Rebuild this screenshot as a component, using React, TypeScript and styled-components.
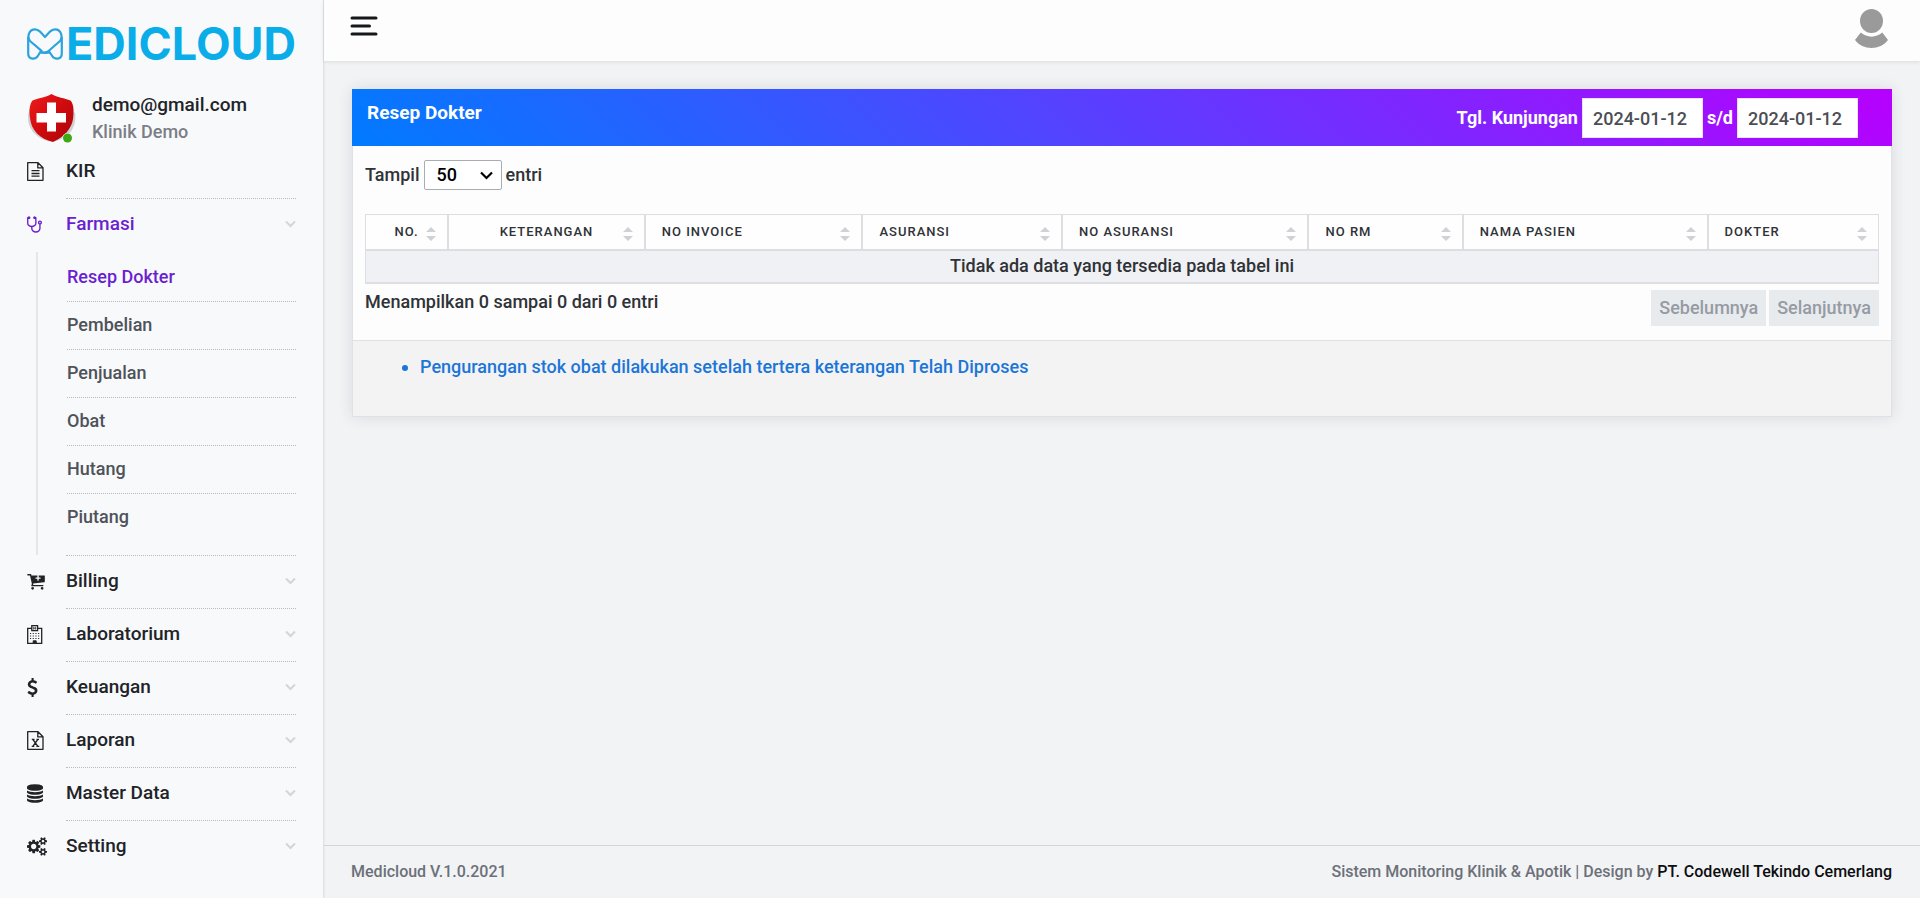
import React from "react";
import styled, { createGlobalStyle, css } from "styled-components";

const GlobalStyle = createGlobalStyle`
  *, *::before, *::after { box-sizing: border-box; }
  body {
    margin: 0;
    background: #f2f3f5;
    color: #2f3236;
    font-family: Roboto, "Liberation Sans", sans-serif;
    font-size: 18px;
    font-weight: 500;
    line-height: 24px;
  }
  a { color: inherit; text-decoration: none; }
  button, input, select { font: inherit; }
  button { cursor: pointer; }
`;

/* ---------- shell ---------- */

const Shell = styled.div`
  display: flex;
  min-height: 100vh;
`;

const Sidebar = styled.aside`
  flex: 0 0 324px;
  padding: 0 27px;
  background: #f8f9fb;
  border-right: 1px solid #dfe1e5;
  box-shadow: 1px 0 2px rgba(0, 0, 0, 0.04);
`;

const Column = styled.div`
  flex: 1;
  min-width: 0;
  display: flex;
  flex-direction: column;
`;

const TopBar = styled.header`
  display: flex;
  justify-content: space-between;
  align-items: flex-start;
  height: 61px;
  padding: 6px 28px 0 26px;
  background: #fdfdfd;
  box-shadow: 0 1px 4px rgba(0, 0, 0, 0.1);
`;

const PlainButton = styled.button`
  display: block;
  padding: 0;
  border: 0;
  background: none;
`;

const BurgerButton = styled(PlainButton)`
  padding-top: 10px;
`;

const Main = styled.main`
  flex: 1;
  padding: 28px;
`;

const PageFooter = styled.footer`
  display: flex;
  justify-content: space-between;
  padding: 14px 28px 14px 27px;
  border-top: 1px solid #d3d6dc;
  color: #6c7079;
  font-size: 16px;
  a { color: #0c0d0f; }
`;

/* ---------- sidebar ---------- */

const Brand = styled.a`
  display: flex;
  align-items: center;
  gap: 3px;
  height: 89px;
  padding-bottom: 2px;
  color: #0bade9;
  font-family: Inter, sans-serif;
  font-size: 45px;
  font-weight: 700;
  line-height: 48px;
`;

const Profile = styled.div`
  display: flex;
  gap: 16px;
  height: 57px;
  padding-top: 4px;
`;

const ProfileText = styled.div`
  display: flex;
  flex-direction: column;
  gap: 3px;
`;

const Mail = styled.span`
  color: #212327;
  font-size: 19px;
`;

const Clinic = styled.span`
  color: #7b7e85;
`;

const Menu = styled.ul`
  margin: 0;
  padding: 0;
  list-style: none;
`;

const MenuItem = styled.li`
  &:last-child > a > span { border-bottom-color: transparent; }
`;

const MenuLink = styled.a<{ $active?: boolean }>`
  display: grid;
  grid-template-columns: 39px 1fr;
  align-items: center;
  height: 53px;
  color: ${(p) => (p.$active ? "#6a1fd0" : "#212327")};
  font-size: 19px;
  > svg { margin-bottom: 2px; }
`;

const MenuLabel = styled.span<{ $plain?: boolean }>`
  display: flex;
  align-items: center;
  justify-content: space-between;
  height: 53px;
  padding-bottom: 2px;
  border-bottom: 1px dotted ${(p) => (p.$plain ? "transparent" : "#b9bcc2")};
`;

const SubMenu = styled.ul`
  margin: 0 0 0 9px;
  padding: 2px 0 14px 29px;
  border-left: 2px solid #e4e6ea;
  list-style: none;
`;

const SubItem = styled.li`
  border-bottom: 1px dotted #b9bcc2;
  &:last-child { border-bottom: 0; }
`;

const SubLink = styled.a<{ $active?: boolean }>`
  display: block;
  padding: 11px 0 12px;
  color: ${(p) => (p.$active ? "#6a1fd0" : "#4f5259")};
`;

const GroupRule = styled.div`
  margin-left: 39px;
  border-bottom: 1px dotted #b9bcc2;
`;

/* ---------- card ---------- */

const Card = styled.section`
  border: 1px solid #dfe1e4;
  border-top: 0;
  background: #fdfdfd;
  box-shadow: 0 0 14px rgba(40, 45, 60, 0.12);
`;

const CardHeader = styled.div`
  display: flex;
  justify-content: space-between;
  align-items: flex-start;
  height: 57px;
  margin: 0 -1px;
  padding: 9px 34px 0 15px;
  background: linear-gradient(45deg, #007bff, #b700ff);
  color: #fff;
  font-weight: 700;
`;

const CardTitle = styled.h1`
  margin: 0;
  padding-top: 3px;
  font-size: 19px;
  font-weight: 700;
  line-height: 24px;
`;

const DateRange = styled.div`
  display: flex;
  align-items: center;
  gap: 4px;
`;

const DateInput = styled.input`
  width: 121px;
  height: 40px;
  padding: 0 10px;
  border: 1px solid #e8e0ff;
  border-radius: 0;
  background: #fff;
  color: #4b4e54;
  font-weight: 500;
`;

const CardBody = styled.div`
  padding: 14px 12px;
`;

const LengthRow = styled.label`
  display: flex;
  align-items: center;
  gap: 4px;
  margin-bottom: 24px;
`;

const SelectBox = styled.span`
  display: grid;
  align-items: center;
  width: 78px;
  height: 30px;
  border: 1px solid #a9acb1;
  border-radius: 2px;
  background: #fff;
  > * { grid-area: 1 / 1; }
  > svg { justify-self: end; margin-right: 8px; pointer-events: none; }
`;

const Select = styled.select`
  appearance: none;
  width: 100%;
  height: 28px;
  padding: 0 0 0 12px;
  border: 0;
  background: none;
  color: #000;
`;

const Table = styled.table`
  width: 100%;
  table-layout: fixed;
  border-collapse: separate;
  border-spacing: 0;
  border: 1px solid #dcdee2;
  border-bottom-width: 2px;
`;

const HeadCell = styled.th<{ $width: number }>`
  width: ${(p) => p.$width}%;
  padding: 0;
  border-bottom: 2px solid #dcdee2;
  border-right: 2px solid #dcdee2;
  background: #fefefe;
  &:last-child { border-right: 0; }
`;

const SortButton = styled(PlainButton)<{ $centered?: boolean }>`
  display: grid;
  align-items: center;
  width: 100%;
  height: 34px;
  color: #2f3236;
  font-size: 13px;
  font-weight: 500;
  line-height: 18px;
  letter-spacing: 1px;
  text-transform: uppercase;
  ${(p) =>
    p.$centered
      ? css`
          grid-template-columns: 10px 1fr 10px;
          padding: 0 11px;
          text-align: center;
          &::before { content: ""; }
        `
      : css`
          grid-template-columns: 1fr 10px;
          padding: 0 11px 0 16px;
          text-align: left;
        `}
  svg { margin-top: 3px; }
`;

const EmptyCell = styled.td`
  height: 31px;
  padding: 0 12px 2px;
  background: #f0f1f4;
  text-align: center;
`;

const TableFooter = styled.div`
  display: flex;
  justify-content: space-between;
  align-items: flex-start;
  padding-top: 6px;
`;

const Pager = styled.div`
  display: flex;
  gap: 3px;
`;

const PageButton = styled.button`
  height: 36px;
  padding: 0 8px;
  border: 0;
  background: #e8ebee;
  color: #969ba3;
`;

const CardFooter = styled.div`
  min-height: 76px;
  padding: 14px 13px;
  border-top: 1px solid #dfe1e4;
  background: #f3f3f4;
`;

const Notes = styled.ul`
  margin: 0;
  padding-left: 54px;
  color: #1c76d8;
`;

/* ---------- icons ---------- */

type GlyphProps = { width: number; d: string };

const Glyph = ({ width, d }: GlyphProps) => (
  <svg
    width={Math.round((width * 19) / 1792)}
    height="19"
    viewBox={`0 0 ${width} 1792`}
    fill="currentColor"
    aria-hidden="true"
  >
    <path d={d} />
  </svg>
);

const stethoscope =
  "M1280 704q0-26-19-45t-45-19-45 19-19 45 19 45 45 19 45-19 19-45zm128 0q0 62-35.500 111t-92.500 70v395q0 159-131.500 271.500t-316.500 112.500-316.500-112.500-131.500-271.500v-132q-164-20-274-128t-110-252v-512q0-26 19-45t45-19q6 0 16 2 17-30 47-48t65-18q53 0 90.500 37.500t37.500 90.500-37.500 90.500-90.500 37.500q-33 0-64-18v402q0 106 94 181t226 75 226-75 94-181v-402q-31 18-64 18-53 0-90.500-37.500t-37.500-90.500 37.500-90.500 90.500-37.500q35 0 65 18t47 48q10-2 16-2 26 0 45 19t19 45v512q0 144-110 252t-274 128v132q0 106 94 181t226 75 226-75 94-181v-395q-57-21-92.500-70t-35.500-111q0-80 56-136t136-56 136 56 56 136z";

const cart =
  "M1280 576q0-26-19-45t-45-19h-128v-128q0-26-19-45t-45-19-45 19-19 45v128h-128q-26 0-45 19t-19 45 19 45 45 19h128v128q0 26 19 45t45 19 45-19 19-45v-128h128q26 0 45-19t19-45zM640 1536q0 53-37.500 90.500t-90.500 37.500-90.500-37.500-37.500-90.500 37.500-90.500 90.500-37.500 90.500 37.500 37.500 90.500zm896 0q0 53-37.500 90.500t-90.500 37.500-90.500-37.500-37.500-90.500 37.500-90.500 90.500-37.500 90.500 37.500 37.500 90.500zm128-1152v512q0 24-16 42.500t-41 21.500l-1044 122q1 7 4.500 21.500t6 26.500 2.500 22q0 16-24 64h920q26 0 45 19t19 45-19 45-45 19h-1024q-26 0-45-19t-19-45q0-14 11-39.500t29.500-59.500 20.500-38l-177-823h-204q-26 0-45-19t-19-45 19-45 45-19h256q16 0 28.500 6.500t20 15.500 13 24.500 7.500 26.500 5.500 29.500 4.500 25.500h1201q26 0 45 19t19 45z";

const dollar =
  "M978 1185q0 153-99.500 263.500t-258.500 136.500v175q0 14-9 23t-23 9h-135q-13 0-22.500-9.500t-9.500-22.500v-175q-66-9-127.500-31t-101.500-44.500-74-48-46.500-37.500-17.500-18q-17-21-2-41l103-135q7-10 23-12 15-2 24 9l2 2q113 99 243 125 37 8 74 8 81 0 142.500-43t61.500-122q0-28-15-53t-33.500-42-58.500-37.500-66-32-80-32.500q-39-16-61.500-25t-61.500-26.500-62.500-31-56.500-35.500-53.500-42.500-43.500-49-35.500-58-21-66.500-8.500-78q0-138 98-242t255-134v-180q0-13 9.500-22.500t22.500-9.500h135q14 0 23 9t9 23v176q57 6 110.500 23t87 33.500 63.500 37.500 39 29 15 14q17 18 5 38l-81 146q-8 15-23 16-14 3-27-7-3-3-14.500-12t-39-26.500-58.500-32-74.500-26-85.500-11.500q-95 0-155 43t-60 111q0 26 8.500 48t29.500 41.500 39.500 33 56 31 60.500 27 70 27.500q53 20 81 31.500t76 35 75.500 42.500 62 50 53 63.500 31.500 76.500 13 94z";

const database =
  "M768 768q237 0 443-43t325-127v170q0 69-103 128t-280 93.500-385 34.500-385-34.500-280-93.500-103-128v-170q119 84 325 127t443 43zm0 768q237 0 443-43t325-127v170q0 69-103 128t-280 93.500-385 34.500-385-34.500-280-93.500-103-128v-170q119 84 325 127t443 43zm0-384q237 0 443-43t325-127v170q0 69-103 128t-280 93.500-385 34.500-385-34.500-280-93.500-103-128v-170q119 84 325 127t443 43zm0-1152q208 0 385 34.500t280 93.500 103 128v128q0 69-103 128t-280 93.500-385 34.500-385-34.500-280-93.500-103-128v-128q0-69 103-128t280-93.500 385-34.500z";

const cogs =
  "M896 896q0-106-75-181t-181-75-181 75-75 181 75 181 181 75 181-75 75-181zm768 512q0-52-38-90t-90-38-90 38-38 90q0 53 37.500 90.500t90.500 37.500 90.500-37.500 37.500-90.500zm0-1024q0-52-38-90t-90-38-90 38-38 90q0 53 37.500 90.500t90.500 37.500 90.500-37.500 37.500-90.500zm-384 421v185q0 10-7 19.500t-16 10.500l-155 24q-11 35-32 76 34 48 90 115 7 11 7 20 0 12-7 19-23 30-82.500 89.500t-78.500 59.500q-11 0-21-7l-115-90q-37 19-77 31-11 108-23 155-7 24-30 24h-186q-11 0-20-7.500t-10-17.500l-23-153q-34-10-75-31l-118 89q-7 7-20 7-11 0-21-8-144-133-144-160 0-9 7-19 10-14 41-53t47-61q-23-44-35-82l-152-24q-10-1-17-9.500t-7-19.500v-185q0-10 7-19.500t16-10.500l155-24q11-35 32-76-34-48-90-115-7-11-7-20 0-12 7-20 22-30 82-89t79-59q11 0 21 7l115 90q34-18 77-32 11-108 23-154 7-24 30-24h186q11 0 20 7.500t10 17.500l23 153q34 10 75 31l118-89q8-7 20-7 11 0 21 8 144 133 144 160 0 8-7 19-12 16-42 54t-45 60q23 48 34 82l152 23q10 2 17 10.500t7 19.500zm640 533v140q0 16-149 31-12 27-30 52 51 113 51 138 0 4-4 7-122 71-124 71-8 0-46-47t-52-68q-20 2-30 2t-30-2q-14 21-52 68t-46 47q-2 0-124-71-4-3-4-7 0-25 51-138-18-25-30-52-149-15-149-31v-140q0-16 149-31 13-29 30-52-51-113-51-138 0-4 4-7 4-2 35-20t59-34 30-16q8 0 46 46.500t52 67.500q20-2 30-2t30 2q51-71 92-112l6-2q4 0 124 70 4 3 4 7 0 25-51 138 17 23 30 52 149 15 149 31zm0-1024v140q0 16-149 31-12 27-30 52 51 113 51 138 0 4-4 7-122 71-124 71-8 0-46-47t-52-68q-20 2-30 2t-30-2q-14 21-52 68t-46 47q-2 0-124-71-4-3-4-7 0-25 51-138-18-25-30-52-149-15-149-31v-140q0-16 149-31 13-29 30-52-51-113-51-138 0-4 4-7 4-2 35-20t59-34 30-16q8 0 46 46.500t52 67.500q20-2 30-2t30 2q51-71 92-112l6-2q4 0 124 70 4 3 4 7 0 25-51 138 17 23 30 52 149 15 149 31z";

const SheetIcon = ({ children }: { children: React.ReactNode }) => (
  <svg width="17" height="19" viewBox="0 0 17 19" fill="none" stroke="currentColor" strokeWidth="1.300" aria-hidden="true">
    <path d="M.7.700h10.300l5 5v12.600H.7zM10.800.700v5.200H16" strokeLinejoin="round" />
    {children}
  </svg>
);

const FileTextIcon = () => (
  <SheetIcon>
    <path d="M4.500 8.700h8M4.500 11.500h8M4.500 14.200h8" />
  </SheetIcon>
);

const FileExcelIcon = () => (
  <SheetIcon>
    <path d="M5.900 8.500l5 6.800M10.800 8.500l-5 6.800M4.800 8.400h2.700M9.500 8.400h2.500M4.700 15.400h2.600M9.400 15.400h2.900" />
  </SheetIcon>
);

const HospitalIcon = () => (
  <svg width="16" height="19" viewBox="0 0 16 19" fill="none" stroke="currentColor" strokeWidth="1.300" aria-hidden="true">
    <path d="M4.800 3.400H.7v14.900h14V3.400h-4.100M4.800 5.600V.7h5.800v4.900z" />
    <path d="M6.700 1.800v2.800M8.700 1.800v2.800M6.700 3.200h2" strokeWidth=".8" />
    <path d="M3 8.500h10M3 11h10M3 13.500h10" strokeWidth="1.100" strokeDasharray="1.100 1.600" />
    <path d="M6.200 18v-2.200h3V18" fill="currentColor" strokeWidth="1" />
  </svg>
);

const Chevron = () => (
  <svg width="11" height="8" viewBox="0 0 11 8" fill="none" stroke="#d3d5d9" strokeWidth="2" aria-hidden="true">
    <path d="M1 1.500l4.500 4.500L10 1.500" />
  </svg>
);

const SelectArrow = () => (
  <svg width="13" height="9" viewBox="0 0 13 9" fill="none" stroke="#000" strokeWidth="2.200" aria-hidden="true">
    <path d="M1 1.500l5.500 5.500L12 1.500" />
  </svg>
);

const SortIcon = () => (
  <svg width="10" height="14" viewBox="0 0 10 14" fill="#cfd1d4" aria-hidden="true">
    <path d="M5 0l5 5H0zM5 14l5-5H0z" />
  </svg>
);

const HeartMark = () => (
  <svg width="36" height="32" viewBox="0 0 36 32" fill="none" stroke="#2ba3dc" strokeWidth="2.200" strokeLinejoin="round" aria-hidden="true">
    <path d="M14 22.300L3 13C0 9.500 1.500 1.300 8 1.300c2.500 0 4 1.300 5 2.300L18 9l5-5.400c1-1 2.500-2.300 5-2.300 6.500 0 8 8.200 5 11.700L21 23.500q-3 2.200-6 .6z" />
    <path d="M1.200 9v16.500c0 6.300 7.300 6.300 9.600 2.500l3.700-6M34.800 9v16.500c0 6.300-7.300 6.300-9.600 2.500l-3.700-5.500M13.500 24.600h9" />
  </svg>
);

const ShieldIcon = () => (
  <svg width="49" height="50" viewBox="0 -1 49 50" aria-hidden="true">
    <defs>
      <linearGradient id="shieldRed" x1="0" y1="0" x2="1" y2="1">
        <stop offset="0" stopColor="#ee1c1c" />
        <stop offset=".5" stopColor="#d00a0e" />
        <stop offset="1" stopColor="#a80508" />
      </linearGradient>
    </defs>
    <path d="M3 14C-2 26 2 42 22 47.500c20-1 28-14 26-29z" fill="#cfd0d3" />
    <path d="M24.500 0c6 3.500 13 4 19 6.500C47 10 47 18 46 25c-1.500 10-9 18-20 23C13 45 4 36 3 24 2 17 2.500 10 5.500 6.500 11 4 18.500 3.500 24.500 0z" fill="url(#shieldRed)" />
    <path d="M20 8.500h9v10.500h10v9.500H29V37.500h-9v-9H9.500V19H20z" fill="#fff" />
    <circle cx="40.500" cy="44" r="5" fill="#f8f9fb" />
    <circle cx="40.500" cy="44" r="4.500" fill="#3fa614" />
  </svg>
);

const BurgerIcon = () => (
  <svg width="28" height="20" viewBox="0 0 28 20" stroke="#17181b" strokeWidth="3" strokeLinecap="round" aria-hidden="true">
    <path d="M2 2h24M2 10h17.500M2 18h24" />
  </svg>
);

const AvatarIcon = () => (
  <svg width="40" height="44" viewBox="0 0 40 44" fill="#9a9a9a" aria-hidden="true">
    <ellipse cx="19.500" cy="15" rx="11.500" ry="12" />
    <path d="M8.800 26.500c6 5.500 15.500 5.500 21.500 0L36 34c-7.500 10.500-25.500 10.500-33 0z" />
  </svg>
);

/* ---------- data ---------- */

type Entry = { label: string; icon: React.ReactNode; leaf?: boolean; children?: string[] };

const entries: Entry[] = [
  { label: "KIR", icon: <FileTextIcon />, leaf: true },
  {
    label: "Farmasi",
    icon: <Glyph width={1408} d={stethoscope} />,
    children: ["Resep Dokter", "Pembelian", "Penjualan", "Obat", "Hutang", "Piutang"],
  },
  { label: "Billing", icon: <Glyph width={1664} d={cart} /> },
  { label: "Laboratorium", icon: <HospitalIcon /> },
  { label: "Keuangan", icon: <Glyph width={1024} d={dollar} /> },
  { label: "Laporan", icon: <FileExcelIcon /> },
  { label: "Master Data", icon: <Glyph width={1536} d={database} /> },
  { label: "Setting", icon: <Glyph width={1920} d={cogs} /> },
];

const columns = [
  { label: "No.", width: 5.5, centered: true },
  { label: "Keterangan", width: 13, centered: true },
  { label: "No Invoice", width: 14.4 },
  { label: "Asuransi", width: 13.2 },
  { label: "No Asuransi", width: 16.3 },
  { label: "No RM", width: 10.2 },
  { label: "Nama Pasien", width: 16.2 },
  { label: "Dokter", width: 11.2 },
];

export default function App() {
  return (
    <>
      <GlobalStyle />
      <Shell>
        <Sidebar>
          <Brand href="#" aria-label="Medicloud">
            <HeartMark />
            EDICLOUD
          </Brand>
          <Profile>
            <ShieldIcon />
            <ProfileText>
              <Mail>demo@gmail.com</Mail>
              <Clinic>Klinik Demo</Clinic>
            </ProfileText>
          </Profile>
          <nav>
            <Menu>
              {entries.map((e) => (
                <MenuItem key={e.label}>
                  <MenuLink href="#" $active={!!e.children}>
                    {e.icon}
                    <MenuLabel $plain={!!e.children}>
                      {e.label}
                      {!e.leaf && <Chevron />}
                    </MenuLabel>
                  </MenuLink>
                  {e.children && (
                    <>
                      <SubMenu>
                        {e.children.map((c, i) => (
                          <SubItem key={c}>
                            <SubLink href="#" $active={i === 0}>
                              {c}
                            </SubLink>
                          </SubItem>
                        ))}
                      </SubMenu>
                      <GroupRule />
                    </>
                  )}
                </MenuItem>
              ))}
            </Menu>
          </nav>
        </Sidebar>
        <Column>
          <TopBar>
            <BurgerButton type="button" aria-label="Menu">
              <BurgerIcon />
            </BurgerButton>
            <PlainButton type="button" aria-label="Akun">
              <AvatarIcon />
            </PlainButton>
          </TopBar>
          <Main>
            <Card>
              <CardHeader>
                <CardTitle>Resep Dokter</CardTitle>
                <DateRange>
                  <label htmlFor="from">Tgl. Kunjungan</label>
                  <DateInput id="from" type="text" defaultValue="2024-01-12" />
                  <label htmlFor="to">s/d</label>
                  <DateInput id="to" type="text" defaultValue="2024-01-12" />
                </DateRange>
              </CardHeader>
              <CardBody>
                <LengthRow>
                  Tampil
                  <SelectBox>
                    <Select defaultValue="50">
                      <option>50</option>
                    </Select>
                    <SelectArrow />
                  </SelectBox>
                  entri
                </LengthRow>
                <Table>
                  <thead>
                    <tr>
                      {columns.map((c) => (
                        <HeadCell key={c.label} $width={c.width} scope="col">
                          <SortButton type="button" $centered={c.centered}>
                            <span>{c.label}</span>
                            <SortIcon />
                          </SortButton>
                        </HeadCell>
                      ))}
                    </tr>
                  </thead>
                  <tbody>
                    <tr>
                      <EmptyCell colSpan={columns.length}>Tidak ada data yang tersedia pada tabel ini</EmptyCell>
                    </tr>
                  </tbody>
                </Table>
                <TableFooter>
                  <span>Menampilkan 0 sampai 0 dari 0 entri</span>
                  <Pager>
                    <PageButton type="button" disabled>
                      Sebelumnya
                    </PageButton>
                    <PageButton type="button" disabled>
                      Selanjutnya
                    </PageButton>
                  </Pager>
                </TableFooter>
              </CardBody>
              <CardFooter>
                <Notes>
                  <li>Pengurangan stok obat dilakukan setelah tertera keterangan Telah Diproses</li>
                </Notes>
              </CardFooter>
            </Card>
          </Main>
          <PageFooter>
            <span>Medicloud V.1.0.2021</span>
            <span>
              Sistem Monitoring Klinik &amp; Apotik | Design by <a href="#">PT. Codewell Tekindo Cemerlang</a>
            </span>
          </PageFooter>
        </Column>
      </Shell>
    </>
  );
}
